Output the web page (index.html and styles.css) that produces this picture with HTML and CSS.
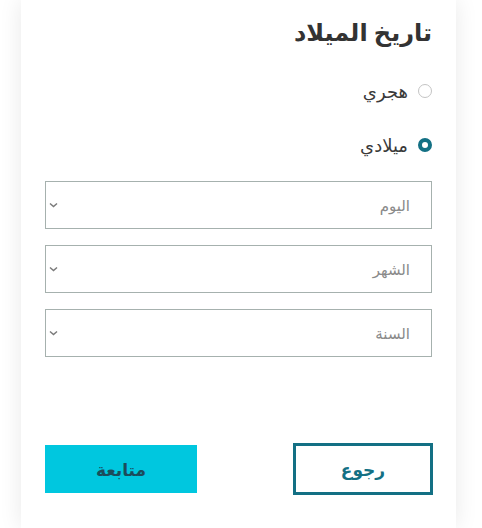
FILE: index.html
```html
<!DOCTYPE html>
<html lang="ar" dir="rtl">
<head>
<meta charset="utf-8">
<link rel="stylesheet" href="styles.css">
</head>
<body>
<div class="page">
  <div class="card">
    <h1 class="title">تاريخ الميلاد</h1>
    <div class="radios">
      <label class="radio"><span class="dot"></span><span class="radio-label">هجري</span></label>
      <label class="radio"><span class="dot checked"></span><span class="radio-label">ميلادي</span></label>
    </div>
    <div class="selects">
      <div class="select"><span class="placeholder">اليوم</span><svg class="chev" width="9" height="6" viewBox="0 0 9 6"><path d="M1 1.5 L4.5 4.5 L8 1.5" fill="none" stroke="#7a7a7a" stroke-width="1.5"/></svg></div>
      <div class="select"><span class="placeholder">الشهر</span><svg class="chev" width="9" height="6" viewBox="0 0 9 6"><path d="M1 1.5 L4.5 4.5 L8 1.5" fill="none" stroke="#7a7a7a" stroke-width="1.5"/></svg></div>
      <div class="select"><span class="placeholder">السنة</span><svg class="chev" width="9" height="6" viewBox="0 0 9 6"><path d="M1 1.5 L4.5 4.5 L8 1.5" fill="none" stroke="#7a7a7a" stroke-width="1.5"/></svg></div>
    </div>
    <div class="actions">
      <button class="btn btn-back">رجوع</button>
      <button class="btn btn-next">متابعة</button>
    </div>
  </div>
</div>
</body>
</html>
```
FILE: styles.css
```css
html, body {
  margin: 0;
  padding: 0;
  background: #fff;
  height: 100%;
  overflow: hidden;
}
body {
  font-family: "Noto Sans", "DejaVu Sans", sans-serif;
}
.page {
  display: flex;
  direction: ltr;
  padding-left: 21px;
  height: 100%;
}
.card {
  direction: rtl;
  width: 435px;
  height: 100%;
  box-sizing: border-box;
  background: #fff;
  box-shadow: 0 0 22px rgba(0, 0, 0, 0.09);
  padding: 14px 24px 0 24px;
}
.title {
  margin: 0;
  font-size: 24px;
  font-weight: 700;
  color: #333;
  line-height: 36px;
}
.radios {
  display: flex;
  flex-direction: column;
  gap: 26px;
  margin-top: 27px;
}
.radio {
  display: flex;
  align-items: center;
  gap: 10px;
  height: 28px;
}
.dot {
  width: 14px;
  height: 14px;
  border-radius: 50%;
  border: 1px solid #c4c4c4;
  box-sizing: border-box;
  background: #fff;
}
.dot.checked {
  border: 4px solid #137084;
}
.radio-label {
  font-size: 18px;
  color: #3a3a3a;
}
.selects {
  display: flex;
  flex-direction: column;
  gap: 16px;
  margin-top: 22px;
}
.select {
  height: 48px;
  box-sizing: border-box;
  border: 1px solid #a6b1ae;
  display: flex;
  align-items: center;
  justify-content: space-between;
  padding: 0 21px 0 3px;
}
.placeholder {
  font-size: 15px;
  color: #8a8a8a;
}
.chev {
  display: block;
}
.actions {
  display: flex;
  justify-content: space-between;
  align-items: center;
  margin-top: 86px;
}
.btn {
  font-family: inherit;
  font-weight: 700;
  font-size: 17px;
  cursor: pointer;
}
.btn-back {
  width: 140px;
  height: 52px;
  margin-right: -1px;
  background: #fff;
  border: 3px solid #137084;
  color: #137084;
}
.btn-next {
  width: 152px;
  height: 48px;
  background: #00c7df;
  border: none;
  color: #1b4c5c;
}
```
